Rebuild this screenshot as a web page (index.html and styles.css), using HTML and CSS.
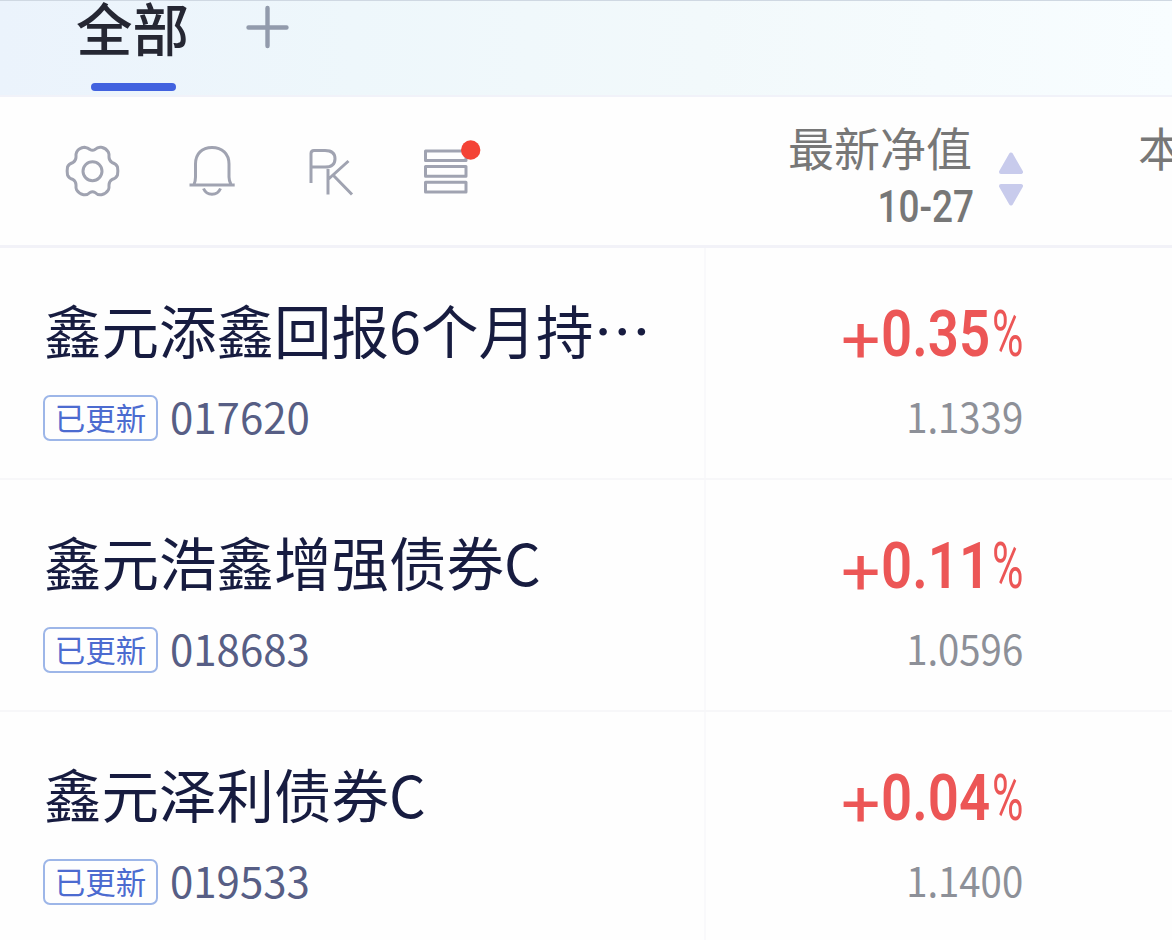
FILE: index.html
```html
<!DOCTYPE html>
<html lang="zh-CN">
<head>
<meta charset="utf-8">
<title>全部</title>
<link rel="stylesheet" href="styles.css">
</head>
<body>
<div class="app">
  <nav class="tabs">
    <div class="tab">全部</div>
    <svg class="add" width="44" height="44" viewBox="0 0 44 44"><path d="M22.500 3V41M3.500 22.500H41.500" fill="none" stroke="#929bac" stroke-width="4.400" stroke-linecap="round"/></svg>
  </nav>

  <header class="head">
    <div class="tools">
      <svg class="tool" width="480" height="80" viewBox="0 0 480 80" fill="none" stroke="#a0a3b1" stroke-width="3" stroke-linejoin="round">
        <path d="M34.500 12.300Q38 12.800 40 14.500Q42.500 16 45 14.500Q48 11.500 51.500 12.300Q56 13.200 58.300 17Q59.300 19 59 22Q59 25.500 62 27.500Q66.500 29 67.500 32Q68.200 36 67.500 40Q66.500 43 62 44.500Q59 46.500 59 50Q59.300 53 58.300 55Q56 58.800 51.500 59.700Q48 60.500 45 57.500Q42.500 56 40 57.500Q37 60.500 33.500 59.700Q29 58.800 26.700 55Q25.700 53 26 50Q26 46.500 23 44.500Q18.500 43 17.500 40Q16.800 36 17.500 32Q18.500 29 23 27.500Q26 25.500 26 22Q25.700 19 26.700 17Q29 12.800 34.500 12.300Z"/>
        <circle cx="42.500" cy="36.200" r="9.500"/>
        <path d="M139.500 50H184.700M144 49.500Q145.500 46 145.500 42V29C145.500 18.500 152 12.500 162 12.500S179 18.500 179 29V42Q179 46 181 49.500M153.500 53.500Q156 59.300 162 59.300T170.500 53.500"/>
        <path d="M261 48V18.500Q261 15.500 264 15.500H275Q285 15.500 285 23.700Q285 32 275 32H261M278 34V59.500M298.500 26L278 44.500M283 40L302 59.500"/>
        <path d="M375.500 16H416V25.500H375.500ZM375.500 31.500H416V41.300H375.500ZM375.500 47.300H416V57H375.500Z"/>
        <circle cx="420.700" cy="15" r="9.700" fill="#f44336" stroke="none"/>
      </svg>
    </div>
    <div class="sort">
      <div class="labels"><div class="label">最新净值</div><div class="date"><span>10-27</span></div></div>
      <svg class="arrows" width="26" height="56" viewBox="0 0 26 56" fill="#c8cbec" stroke="#c8cbec" stroke-width="4" stroke-linejoin="round"><path d="M13 3.500L23 21H3ZM13 52.500L23 35H3Z"/></svg>
    </div>
    <div class="next">本</div>
  </header>

  <main>
    <section class="row">
      <div class="fund"><div class="name">鑫元添鑫回报6个月持…</div><div class="meta"><span class="badge">已更新</span><span class="code">017620</span></div></div>
      <div class="value"><div class="rate"><span class="sign">+</span><span class="num">0.35</span><span class="pct">%</span></div><div class="nav"><span>1.1339</span></div></div>
    </section>
    <section class="row">
      <div class="fund"><div class="name">鑫元浩鑫增强债券C</div><div class="meta"><span class="badge">已更新</span><span class="code">018683</span></div></div>
      <div class="value"><div class="rate"><span class="sign">+</span><span class="num">0.11</span><span class="pct">%</span></div><div class="nav"><span>1.0596</span></div></div>
    </section>
    <section class="row">
      <div class="fund"><div class="name">鑫元泽利债券C</div><div class="meta"><span class="badge">已更新</span><span class="code">019533</span></div></div>
      <div class="value"><div class="rate"><span class="sign">+</span><span class="num">0.04</span><span class="pct">%</span></div><div class="nav"><span>1.1400</span></div></div>
    </section>
  </main>
</div>
</body>
</html>
```
FILE: styles.css
```css
* { box-sizing: border-box; }
body { margin: 0; font-family: "Noto Sans CJK SC", sans-serif; background: #fefefe; }
.app { width: 1172px; height: 940px; overflow: hidden; white-space: nowrap; }

.tabs {
  display: flex; align-items: flex-start; height: 97px; padding-left: 76px;
  background: linear-gradient(90deg, #ebf3fc 0%, #eef7fb 30%, #f2f9fb 60%, #f8fdff 100%);
  border-top: 1px solid #cfd8e2; border-bottom: 2px solid #f1f2f9;
}
.tab { width: 114px; height: 90px; font-size: 56.500px; line-height: 51px; font-weight: 500; color: #252733; }
.tab::after { content: ""; display: block; width: 85px; height: 8px; margin: 31px 0 0 14.500px; border-radius: 4px; background: #4262df; }
.add { margin: 4px 0 0 55px; }

.head { display: flex; height: 151px; border-bottom: 3px solid #f2f2f8; }
.tools { width: 705px; padding: 38px 0 0 50px; }
.tool { display: block; }
.sort { display: flex; width: 433px; padding-left: 83px; }
.labels { width: 186px; padding-top: 24px; }
.label { font-size: 46px; line-height: 50px; color: #777; }
.date { display: flex; justify-content: flex-end; font: 500 44px/50px Roboto, sans-serif; color: #777; margin-top: 11px; }
.date span { transform: scaleX(.84); transform-origin: right; }
.arrows { margin: 54px 0 0 24px; }
.next { font-size: 46px; line-height: 50px; padding-top: 24px; color: #777; width: 34px; }

.row { display: flex; height: 232px; border-bottom: 2px solid #f7f7f9; }
.fund { width: 706px; padding: 52px 0 0 43px; border-right: 2px solid #f9f9fb; }
.name { font-size: 57.500px; line-height: 58px; padding-left: 1px; color: #171c40; }
.meta { display: flex; align-items: center; gap: 12px; margin-top: 37px; height: 46px; }
.badge { width: 115px; height: 46px; border: 2px solid #9db6e8; border-radius: 7px; font-size: 30.500px; line-height: 40px; text-align: center; color: #4c6bd0; }
.code { font-size: 42px; line-height: 46px; margin-top: -4px; color: #575e85; }
.value { width: 318px; padding-top: 57px; }
.rate { display: flex; height: 58px; padding-left: 134px; font: 600 65px/58px Roboto, sans-serif; color: #ec5656; }
.rate span { transform-origin: left; }
.sign { width: 41px; font-weight: 400; transform: translate(1px, 6px) scaleX(1.07); }
.num { width: 111px; transform: scaleX(.84); }
.pct { width: 31px; font-weight: 400; transform: scaleX(.66); }
.nav { display: flex; justify-content: flex-end; margin-top: 29px; padding-right: 1px; font-size: 41px; line-height: 46px; color: #8d9098; }
.nav span { transform: scaleX(.935); transform-origin: right; }
```
